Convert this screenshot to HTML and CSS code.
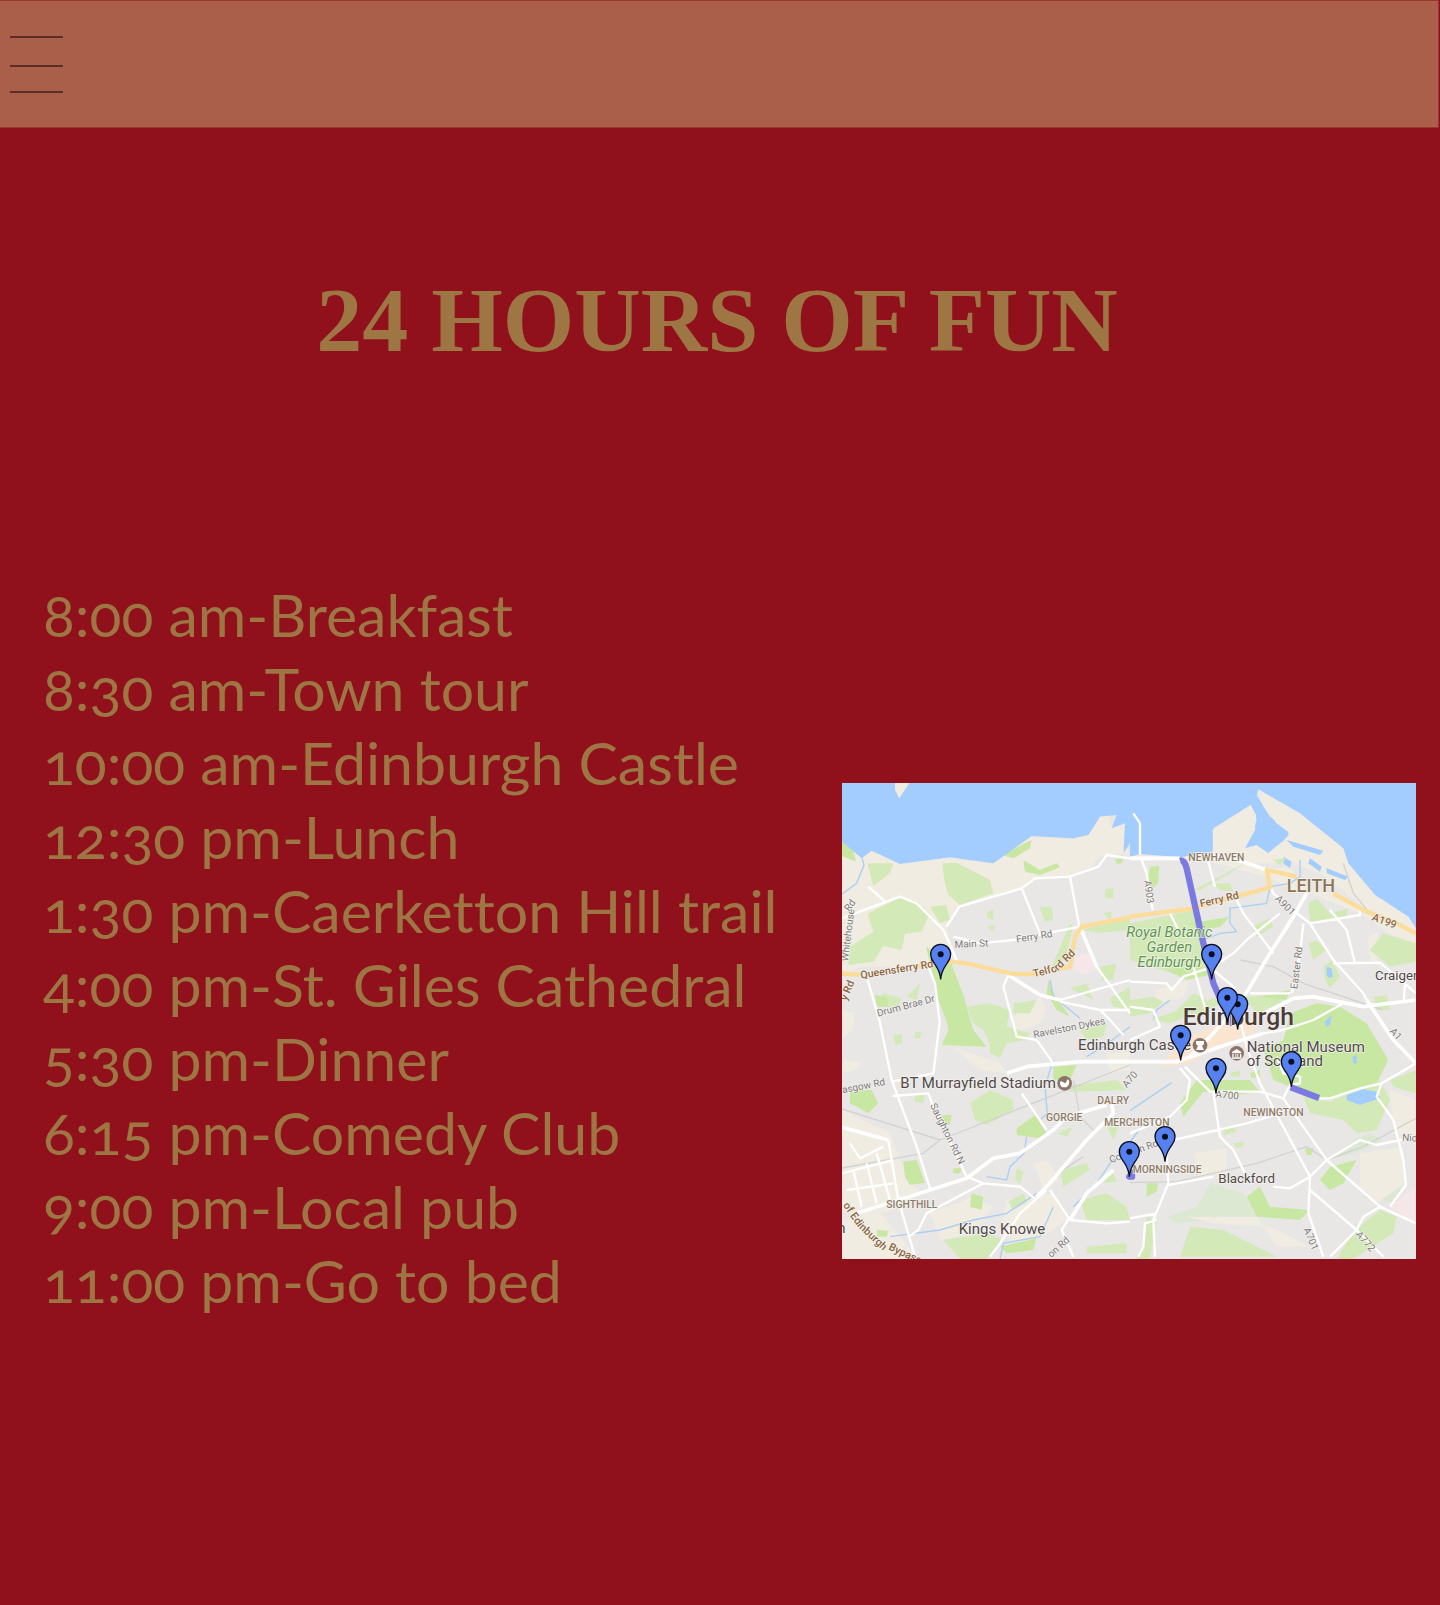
FILE: index.html
```html
<!DOCTYPE html>
<html lang="en">
<head>
<meta charset="utf-8">
<meta name="viewport" content="width=device-width, initial-scale=1">
<title>24 Hours of Fun</title>
<link rel="stylesheet" href="styles.css">
</head>
<body>
<header class="topbar">
  <button class="menu-button" type="button" aria-label="Open menu">
    <svg class="menu-icon" viewBox="0 0 53 57" aria-hidden="true"><path d="M0 0h53v2H0zM0 29h53v2H0zM0 55h53v2H0z"/></svg>
  </button>
</header>
<main class="page">
  <h1 class="title">24 HOURS OF FUN</h1>
  <div class="plan">
    <ul class="schedule">
      <li>8:00 am-Breakfast</li>
      <li>8:30 am-Town tour</li>
      <li>10:00 am-Edinburgh Castle</li>
      <li>12:30 pm-Lunch</li>
      <li>1:30 pm-Caerketton Hill trail</li>
      <li>4:00 pm-St. Giles Cathedral</li>
      <li>5:30 pm-Dinner</li>
      <li>6:15 pm-Comedy Club</li>
      <li>9:00 pm-Local pub</li>
      <li>11:00 pm-Go to bed</li>
    </ul>
    <svg class="map" viewBox="0 0 1722 1428" role="img" aria-label="Map of Edinburgh with the stops of the day">
      <defs>
        <g id="pin">
          <path d="M0 0C-2-26-10-34-20-49C-27-58-30-65-30-75A30 30 0 0 1 30-75C30-65 27-58 20-49C10-34 2-26 0 0Z"/>
          <circle cy="-75" r="9"/>
        </g>
      </defs>
      <rect class="land" width="1722" height="1428"/>

      <!-- north west: terrain -->
      <g transform="translate(-6 -9)">
        <path class="sand" d="M0 180L60 232L95 212L180 250L310 235L460 250L575 170L700 178L760 150L790 108L815 145L870 220L780 228L750 262L690 290L585 300L540 325L358 378L320 440L350 540L240 560L60 560L0 590ZM520 710L600 650L620 690L600 730L530 760ZM0 690L45 700L40 750L0 780Z"/>
        <path class="park" d="M82 402L180 352L230 365L268 402L245 455L195 462L185 510L130 498L100 545L25 555L30 500L100 455ZM308 250L350 248L450 300L460 340L360 375L325 345L312 300ZM82 250L160 250L150 280L100 318ZM440 398L460 388L460 420L442 415ZM440 440L465 435L460 455ZM598 382L635 380L640 420L615 425ZM795 328L820 325V355H795ZM790 400L815 395L812 420ZM270 380L320 375L330 420L300 430ZM130 640L185 655L170 690L110 670ZM200 650L240 610L230 660ZM720 450L870 415V450L780 458ZM635 560L690 430L700 440L680 520L655 570ZM520 670L590 660L570 700H520ZM780 560L830 550L820 600H785ZM690 625L740 610L760 660ZM810 655L870 620V690L820 680Z"/>
        <path class="park2" d="M6 185L40 212L48 245L6 228ZM485 225L575 180L570 205L520 235ZM550 240L600 270L650 250L660 262L600 285L555 275ZM825 238L850 235L845 250L830 252ZM258 500L330 540L372 650L385 700L400 750L440 800L305 795L325 750L320 725L295 660L285 640L275 570ZM105 645L140 650L145 680H110ZM625 600L640 640L690 710L650 690L620 640Z"/>
        <path class="pink" d="M705 530L750 520L770 565L735 585L700 570Z"/>
        <path class="water" d="M0 0H870V190L850 220V135L840 140L845 215L820 190L815 145L830 105L780 110L745 165L700 175L575 168L460 250L330 232L180 252L95 212L65 235L6 185ZM780 128L800 138L780 130Z"/>
        <path class="sand" d="M165 9H208L178 55L165 30ZM780 110L805 108L815 145L855 130L850 220L800 225L740 180Z"/>
        <path class="stream" d="M65 230L72 255L50 310L6 342M630 600L640 650L720 715"/>
      </g>
      <!-- north east: terrain -->
      <g transform="translate(864 -9)">
        <path class="sand" d="M0 225L140 235L250 220L400 270L480 260L540 330L620 340L700 400L858 460V500L780 460L690 400L540 340L490 330L410 290L240 245L0 235ZM80 630L180 600L160 650L60 680Z"/>
        <path class="water" d="M0 0H858V445L835 410L760 360L640 290L640 210L480 100L385 28L380 45L420 110L470 140L480 180L460 215L440 235L380 200L345 205L380 120L362 75L250 145L248 215L150 232L30 222L0 230Z"/>
        <path class="sand" d="M385 28L510 100L640 205L655 250L740 350L835 410L858 450L800 440L700 380L600 300L570 280L500 255L460 215L400 250L340 225L345 205L380 195L430 230L460 182L480 160L440 130L400 80Z"/>
        <path class="sand" d="M248 150L362 75L378 105L375 150L345 205L395 235L460 182L490 250H250Z"/>
        <path class="water" d="M470 180L580 212L570 225L490 200ZM460 230L485 245L480 265L460 250ZM540 235L575 260L570 275L535 250ZM590 265L655 290L645 300L590 280Z"/>
        <path class="sand" d="M715 470L745 455L740 540L770 580L720 540Z"/>
        <path class="park" d="M0 430L190 390L215 460L240 560L160 590L0 540ZM190 330L345 250L300 280L210 330ZM250 310L300 310L310 335L270 330ZM535 370L560 355L600 400L655 385L650 410L540 430ZM365 440L420 415L430 440L380 470ZM720 510L760 460L858 490V545L780 560ZM535 490L560 480L590 510L550 540ZM580 560L605 540L630 590L600 625L585 600ZM430 240L470 235L450 255ZM0 660L70 650L100 665L60 700L0 710ZM340 650L450 645L460 680L380 700ZM190 640L230 660L220 690L140 690ZM730 650L770 645L780 690H740Z"/>
        <path class="park2" d="M60 260L88 258L85 310L62 330L52 300ZM180 430L300 410L270 440L210 450ZM390 650L480 630L470 660ZM110 570L200 555L260 580L170 600Z"/>
        <path class="water" d="M590 560L605 565L608 590L598 595L590 585Z"/>
        <path class="stream" d="M480 310L420 320L410 370L300 385L300 430L320 455L270 460L220 480M510 240L510 290L480 310M120 660L80 690L70 720"/>
      </g>
      <!-- south west: terrain -->
      <g transform="translate(-6 711)">
        <path class="sand" d="M6 270L150 340L180 420L240 520L180 560L60 600L0 560ZM6 600L120 580L240 720H0ZM340 80L480 130L500 160L420 150ZM580 430L620 420L660 480L610 510ZM270 580L400 530L460 560L400 640L300 660ZM500 540L640 520L680 600L560 680L480 640ZM10 120L60 125L50 150L6 160ZM800 100L870 95V150L810 160Z"/>
        <path class="park2" d="M190 425L230 420L255 488L210 495L195 470ZM30 212L95 210L115 250L85 280L30 250ZM530 325L585 285L620 340L600 355L530 345ZM395 520L430 530L425 570L390 560ZM340 445L365 445L360 460L340 460ZM110 630L145 632L140 650H112ZM305 285L335 285L330 315L315 310ZM640 140L710 135L690 180L640 180ZM480 680L590 655L580 690L500 700Z"/>
        <path class="park" d="M380 -40L450 -50L510 -30L500 20L570 40L560 60L500 70L480 115L450 100L450 75L430 30L400 10ZM390 250L450 210L520 240L520 270L440 315L405 300ZM640 200L830 180L860 210L700 215ZM160 45L185 42L188 70L165 75ZM225 35L245 35L240 55H225ZM310 660L440 640L490 660L440 717H360ZM720 540L800 520L860 560L870 600L740 600ZM660 450L740 430L750 450L670 500ZM800 320L840 310L820 360ZM225 225L255 220L250 250L225 245ZM720 30L800 10L790 50L740 60ZM505 545L550 520L560 545L520 570ZM740 680L860 670V700H740ZM530 445L552 455L540 490L525 480ZM650 340L700 320L680 350ZM790 470L820 460L830 485L795 490Z"/>
        <path class="water" d="M740 515L755 498L765 505L750 520Z"/>
        <path class="stream" d="M150 650L300 630L400 600L500 580L590 520M560 350L552 400L510 440L500 480L440 470M870 365L810 430L770 490L700 560M640 560L600 650L490 670L480 717M640 120L615 200L622 280L600 300M870 20L790 80L740 110"/>
      </g>
      <!-- south east: terrain -->
      <g transform="translate(864 711)">
        <path class="park2" d="M430 180L400 90L460 60L480 -20L560 -50L630 -40L710 10L775 120L740 190L600 240L530 230L480 200ZM160 290L150 250L200 180L360 180L390 215L320 225L220 215ZM570 480L600 440L680 420L640 490L600 510ZM350 530L390 500L420 560L540 570L510 600L380 590ZM50 490L85 490L80 515L50 530ZM525 385L550 385L545 405L530 405ZM360 160L390 150V170L365 175Z"/>
        <path class="park" d="M520 230L600 245L750 180L780 240L740 330L680 340L640 300L540 280ZM60 0L250 -65L280 -50L120 10ZM780 180L858 150V220L790 200ZM280 320L310 315L320 335L280 345ZM310 370L340 365V380L320 385ZM180 620L280 630L440 710H150ZM700 610L750 570L800 590L790 640L670 717H620L660 650ZM50 590L80 600L60 717H20L45 650ZM300 160L330 150V170H305Z"/>
        <path class="mist" d="M110 590L200 560L240 490L340 520L380 590L250 600L140 610ZM620 410L670 360L720 340L760 360L700 390L620 415ZM690 530L780 510L820 480L800 550Z"/>
        <path class="sand" d="M190 400L290 385L290 460L210 470ZM170 590L380 590L440 680L540 680L420 620L250 610ZM780 210L858 240V350L790 340ZM690 400L820 380L825 490L740 550L690 510Z"/>
        <path class="pink" d="M780 560L830 520L858 500V600L840 600Z"/>
        <path class="town" d="M130 90L150 60L250 20L330 -10L390 0L370 40L260 80L180 130L90 140Z"/>
        <path class="water" d="M650 225L700 208L740 215L750 235L690 255L650 240ZM585 5L605 -15L600 15L588 20ZM668 110L680 105L680 130L670 130Z"/>
        <path class="stream" d="M0 272L125 188M0 366L50 300"/>
      </g>

      <!-- roads -->
      <g class="roads" transform="translate(-6 -9)">
        <path class="rail" d="M0 985L300 1080L870 855M0 1165L250 1120L300 1080M700 900L720 1010L770 1060M730 1130L640 1190"/>
        <path d="M85 320L135 365M6 415L180 350L230 370L310 450L350 540M320 440L358 380L545 325L585 295L690 290L775 260L800 225L870 235M545 325L600 460M340 470L420 490L520 480L720 440M690 290L718 440L770 560L870 700M80 590L118 720M265 560L285 610L298 720M505 585L490 620L520 730M870 600L660 660M660 665L780 690L870 690M780 690L810 720"/>
        <path class="wide" d="M505 585L600 645L660 660M720 440L770 560M6 1042L145 1080"/>
        <path d="M118 720L155 900L230 1100L270 1225M300 720L280 880L155 905M158 948L265 940L280 980L380 1190M145 1080L175 1260L225 1430M520 730L530 770L590 780L640 850M545 940L620 1050M30 1090L60 1135L130 1100M40 1170L65 1280M80 1150L110 1270M110 1120L150 1260M6 1180L160 1140M20 1230L160 1210M380 1190L430 1210L540 1220L590 1260M430 1210L260 1300L235 1350L205 1370M620 1230L540 1300L480 1390L450 1430M630 1230L690 1320L800 1330L870 1325M690 1310L665 1350L700 1430M810 720L850 765"/>
        <path class="wide" d="M50 1300L270 1230L380 1195L460 1135L540 1120L640 1050L680 1010L800 975M500 880L560 860L720 845L870 845M590 1250L620 1220L740 1080L820 1000L815 970M820 1170L740 1240L690 1320"/>
        <path class="main" d="M0 580L60 584M220 562L330 545L380 550L520 582L590 582L690 560L705 470L725 440L870 412"/>
      </g>
      <g class="roads" transform="translate(864 -9)">
        <path class="rail" d="M330 540L430 560L520 610L760 690M0 1208L140 1205L380 1150L530 1100L590 1140L700 1100L858 1015M640 250L670 340L720 400"/>
        <path class="wide" d="M0 235L150 235M240 225L340 245L410 270M530 340L490 410L420 520L330 670L250 760L180 830M0 845L140 845L270 800L400 760"/>
        <path d="M30 225L30 130L10 100M35 240L50 280L68 390M235 245L255 320M120 400L145 450M190 560L230 700M410 290L430 340L540 430L500 400M315 350L340 400L430 520M600 390L650 450L675 550M540 430L690 405L690 390M540 430L610 540L700 640L710 660M520 430L510 520L485 640M310 520L350 480L450 400M0 605L110 610L125 630L160 590L250 560L310 520M250 570L310 620L330 690M610 550L750 548L800 590L858 640M360 640L480 640M825 600L822 660M330 720L350 800L390 910L540 1190M150 865L180 900L170 960L120 1010L0 1060M165 860L240 935L390 935L460 955L590 1140L750 1280L858 1330M250 935L270 1070L310 1110L345 1180M130 1080L350 1030L450 1000M105 1060L115 1210L70 1320L75 1430M115 1215L250 1190M430 1220L480 1225L540 1190L590 1140L690 1080L740 1095L858 1070M540 1190L535 1300L580 1430M540 1230L680 1350L760 1430M750 1280L700 1310L680 1350L600 1430M780 1280L828 1215L820 1140L790 1020L740 950L755 910L858 850M755 910L690 925L600 955L570 955M460 955L480 915L510 910L510 890L460 880L440 830M400 760L460 750L550 720L640 670M0 780L90 740L70 690L0 680M80 1320L45 1330L40 1400L25 1430M0 1315L80 1300"/>
        <path class="wide" d="M400 700L490 655L550 650L700 680L858 660M710 660L790 780L858 850"/>
        <path class="main" d="M0 410L190 385L420 322L410 270L500 290M610 340L700 390L800 430L858 460"/>
      </g>

      <!-- walking routes -->
      <g class="route" transform="translate(864 -9)">
        <path d="M150 242Q163 238 170 265L220 490L250 610L290 700L310 735"/>
        <path d="M482 922L567 954M-2 1190H6V1178Z"/>
      </g>

      <!-- labels -->
      <g class="labels" transform="translate(-6 -9)">
        <text class="road" transform="translate(344 504) rotate(-3)">Main St</text>
        <text class="road" transform="translate(530 488) rotate(-9)">Ferry Rd</text>
        <text class="road" transform="translate(24 545) rotate(-83)">Whitehouse</text>
        <text class="road" transform="translate(28 396) rotate(-55)">Rd</text>
        <text class="a-road" transform="translate(63 596) rotate(-9)">Queensferry Rd</text>
        <text class="a-road" transform="translate(582 592) rotate(-14)">Telfo</text>
        <text class="a-road" transform="translate(654 574) rotate(-45)">rd Rd</text>
        <text class="a-road" transform="translate(20 664) rotate(-68)">y Rd</text>
        <text class="road" transform="translate(114 710) rotate(-15)">Drum Brae Dr</text>
        <text class="road" transform="translate(582 774) rotate(-11)">Ravelston Dykes</text>
        <text class="road" transform="translate(8 940) rotate(-11)">asgow Rd</text>
        <text class="road" transform="translate(270 976) rotate(64)">Saughton Rd N</text>
        <text class="road" transform="translate(860 925) rotate(-50)">A70</text>
        <text class="road" transform="translate(634 1434) rotate(-42)">on Rd</text>
        <text class="a-road" transform="translate(8 1276) rotate(55)">of Edi</text>
        <text class="a-road" transform="translate(56 1344) rotate(43)">nburgh</text>
        <text class="a-road" transform="translate(144 1408) rotate(25)">Bypass</text>
        <text class="place" x="181" y="924">BT Murrayfield Stadium</text>
        <text class="place" x="714" y="811">Edinburgh Castle</text>
        <text class="place" x="356" y="1363">Kings Knowe</text>
        <text class="place" x="-8" y="1358">n</text>
        <text class="area" x="618" y="1024">GORGIE</text>
        <text class="area" x="772" y="972">DALRY</text>
        <text class="area" x="793" y="1038">MERCHISTON</text>
        <text class="area" x="139" y="1284">SIGHTHILL</text>
        <text class="road" transform="translate(812 1150) rotate(-20)">Colinton Rd</text>
      </g>
      <g class="labels" transform="translate(864 -9)">
        <text class="area" x="175" y="244">NEWHAVEN</text>
        <text class="leith" x="470" y="335">LEITH</text>
        <text class="road" transform="translate(42 302) rotate(82)">A903</text>
        <text class="road" transform="translate(434 358) rotate(45)">A901</text>
        <text class="a-road" transform="translate(212 382) rotate(-13)">Ferry Rd</text>
        <text class="a-road" transform="translate(724 420) rotate(20)">A199</text>
        <text class="road" transform="translate(502 628) rotate(-83)">Easter Rd</text>
        <text class="garden" x="118" y="472">Royal Botanic</text>
        <text class="garden" x="118" y="515">Garden</text>
        <text class="garden" x="118" y="560">Edinburgh</text>
        <text class="small-place" x="735" y="600">Craigentinny</text>
        <text class="city" x="158" y="735">Edinburgh</text>
        <text class="place" x="350" y="815">National Museum</text>
        <text class="place" x="350" y="859">of Scotland</text>
        <text class="road" transform="translate(256 952) rotate(5)">A700</text>
        <text class="road" transform="translate(778 755) rotate(48)">A1</text>
        <text class="road" transform="translate(816 1082) rotate(4)">Niddrie</text>
        <text class="road" transform="translate(520 1348) rotate(67)">A701</text>
        <text class="road" transform="translate(676 1364) rotate(49)">A772</text>
        <text class="area" x="340" y="1007">NEWINGTON</text>
        <text class="area" x="8" y="1178">MORNINGSIDE</text>
        <text class="small-place" x="265" y="1209">Blackford</text>
      </g>

      <!-- landmark badges -->
      <g class="badge" transform="translate(-6 -9)">
        <circle cx="674" cy="910" r="22"/><path d="M661 915Q658 902 664 904L676 910L684 897Q694 910 680 922H666Z"/>
      </g>
      <g class="badge" transform="translate(864 -9)">
        <circle cx="210" cy="796" r="22"/><path d="M198 783H222V792L216 798L222 810H198L204 798L198 792Z"/>
        <circle cx="320" cy="820" r="22"/><path d="M306 816L320 807L334 816V820H306ZM307 822H311V831H307ZM316 822H319V831H316ZM322 822H325V831H322ZM330 822H334V831H330ZM305 832H335V836H305Z"/>
      </g>

      <g class="pins" transform="translate(864 -9)">
        <use href="#pin" x="-568" y="598"/>
        <use href="#pin" x="245" y="598"/>
        <use href="#pin" x="323" y="748"/>
        <use href="#pin" x="292" y="728"/>
        <use href="#pin" x="152" y="841"/>
        <use href="#pin" x="258" y="940"/>
        <use href="#pin" x="484" y="920"/>
        <use href="#pin" x="105" y="1145"/>
        <use href="#pin" x="-2" y="1190"/>
      </g>
    </svg>
  </div>
</main>
</body>
</html>
```
FILE: styles.css
```css
* {
  box-sizing: border-box;
}

body {
  margin: 0;
  min-height: 100vh;
  background: #90111c;
  color: #9e7644;
  font-family: Lato, "Open Sans", sans-serif;
}

.topbar {
  display: flex;
  align-items: center;
  height: 128px;
  margin-right: 1px;
  padding: 0 9px;
  background: #a95f4a;
  border: 1px solid #9c352f;
  border-left: 0;
}

.menu-button {
  padding: 0 1px;
  border: 0;
  background: none;
  cursor: pointer;
}

.menu-icon {
  display: block;
  width: 53px;
  height: 57px;
  fill: #5a2e26;
}

.page {
  padding: 132px 24px 280px 43px;
}

.title {
  margin: 0 0 198px;
  padding-right: 25px;
  font: bold 92px/120px "Liberation Serif", serif;
  text-align: center;
}

.plan {
  display: flex;
  align-items: flex-end;
  justify-content: space-between;
  gap: 24px;
}

.schedule {
  flex: 1;
  margin: 0;
  padding: 0;
  list-style: none;
  font-size: 59px;
  line-height: 74px;
  font-variant-numeric: oldstyle-nums;
  font-variant-ligatures: none;
  white-space: nowrap;
}

.map {
  display: block;
  flex: none;
  width: 42%;
  max-width: 574px;
  margin-bottom: 59px;
  overflow: hidden;
  font-family: Roboto, sans-serif;
}

.land { fill: #e9e7e6; }
.sand { fill: #f0ece1; }
.park { fill: #d3eab8; }
.park2 { fill: #c8e7a2; }
.mist { fill: #dce8d2; }
.pink { fill: #f5e6e8; }
.town { fill: #f9e5d0; }
.water { fill: #a3ccff; }

.stream {
  fill: none;
  stroke: #a9cff2;
  stroke-width: 4;
}

.roads path {
  fill: none;
  stroke: #fff;
  stroke-width: 7;
  stroke-linejoin: round;
}

.roads .wide { stroke-width: 11; }

.roads .main {
  stroke: #fbdc98;
  stroke-width: 13;
}

.roads .rail {
  stroke: #d3d2d2;
  stroke-width: 4;
}

.route path {
  fill: none;
  stroke: #7b7ae0;
  stroke-width: 19;
  stroke-linejoin: round;
}

.labels text {
  stroke: #f6f4f2;
  stroke-width: 4;
  stroke-linejoin: round;
  paint-order: stroke;
}

.labels .road {
  fill: #7d7a78;
  font-size: 30px;
}

.labels .a-road {
  fill: #8a6540;
  font-size: 32px;
  font-weight: 500;
}

.labels .place {
  fill: #504a48;
  font-size: 45px;
}

.labels .small-place {
  fill: #504a48;
  font-size: 40px;
}

.labels .area {
  fill: #8d7b66;
  font-size: 31px;
  font-weight: 500;
}

.labels .leith {
  fill: #8d7652;
  font-size: 54px;
  font-weight: 500;
}

.labels .city {
  fill: #4a3c36;
  font-size: 74px;
  font-weight: 500;
}

.labels .garden {
  fill: #5c944a;
  font-size: 44px;
  font-style: italic;
  text-anchor: middle;
}

.badge circle { fill: #8c7468; }
.badge path { fill: #fff; }

.pins {
  fill: #5681f0;
  stroke: #0b0d1c;
  stroke-width: 4;
}

#pin circle {
  fill: #0b0d1c;
  stroke: none;
}
```
